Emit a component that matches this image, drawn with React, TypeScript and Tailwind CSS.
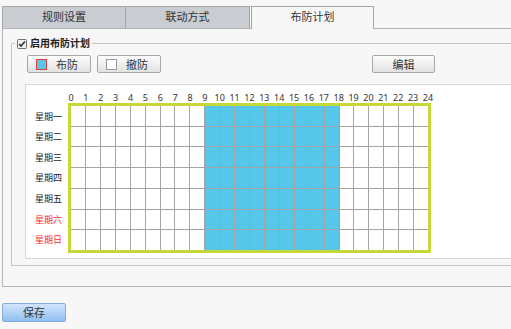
const hours = Array.from({ length: 25 }, (_, i) => i);
const days = ["星期一", "星期二", "星期三", "星期四", "星期五", "星期六", "星期日"];

function Swatch({ on }: { on: boolean }) {
  return (
    <span
      className={
        on
          ? "w-[11px] h-[11px] border border-[#e43b3b] bg-[#57c6ea] shrink-0"
          : "w-[11px] h-[11px] border border-[#9a9a9a] bg-white shrink-0"
      }
    />
  );
}

export default function App() {
  return (
    <div className="w-[511px] h-[329px] overflow-hidden bg-[#f7f7f7] pt-[6px] font-['Noto_Sans','Noto_Sans_CJK_SC',sans-serif] text-[#333]">
      {/* tabs */}
      <div className="flex items-end ml-[2px] h-[22px]">
        <div className="w-[124px] h-[22px] border-t border-l border-r border-[#a6a6a6] bg-[#c9ccd1] flex items-center justify-center text-[11px]">
          规则设置
        </div>
        <div className="w-[124px] h-[22px] border-t border-r border-[#a6a6a6] bg-[#c9ccd1] flex items-center justify-center text-[11px]">
          联动方式
        </div>
        <div className="relative -mb-px ml-px w-[123px] h-[23px] border-t border-l border-r border-[#a6a6a6] bg-[#f7f7f7] flex items-center justify-center text-[11px] pb-px">
          布防计划
        </div>
      </div>

      {/* panel */}
      <div className="ml-[2px] w-[700px] h-[259px] border border-[#b4b4b4] bg-[#f7f7f7] pl-[8px] pt-[8px]">
        <fieldset className="w-[700px] h-[229px] border border-[#c6c6c6]">
          <legend className="ml-[3px] px-[2px] flex items-center gap-[3px] h-[13px]">
            <svg width="10" height="10" viewBox="0 0 10 10" className="shrink-0">
              <rect x="0.5" y="0.5" width="9" height="9" rx="1" fill="#f0f0f0" stroke="#6f6f6f" />
              <path d="M2.2 5.1 L4.1 7.1 L7.9 2.6" fill="none" stroke="#333" strokeWidth="1.6" />
            </svg>
            <span className="text-[10px] font-bold leading-[13px] text-[#222]">启用布防计划</span>
          </legend>

          <div className="flex items-center pl-[15px] pt-[5px]">
            <button className="w-[64px] h-[18px] border border-[#a8a8a8] rounded-[2px] bg-linear-to-b from-[#fdfdfd] to-[#e2e2e2] flex items-center pl-[8px] gap-[9px] text-[11px] leading-none">
              <Swatch on />
              布防
            </button>
            <button className="ml-[6px] w-[64px] h-[18px] border border-[#a8a8a8] rounded-[2px] bg-linear-to-b from-[#fdfdfd] to-[#e2e2e2] flex items-center pl-[8px] gap-[9px] text-[11px] leading-none">
              <Swatch on={false} />
              撤防
            </button>
            <button className="ml-[211px] w-[63px] h-[18px] border border-[#a8a8a8] rounded-[2px] bg-linear-to-b from-[#fdfdfd] to-[#e2e2e2] flex items-center justify-center text-[11px] leading-none">
              编辑
            </button>
          </div>

          {/* schedule */}
          <div className="mt-[11px] ml-[13px] w-[700px] h-[175px] border border-[#d4d7de] bg-white pt-[8px] flex">
            <div className="w-[42px] pt-[13px] pr-[6px] flex flex-col">
              {days.map((d, i) => (
                <div
                  key={d}
                  className={
                    "h-[20.57px] flex items-center justify-end text-[9px] leading-none " +
                    (i >= 5 ? "text-[#ff2a2a]" : "text-[#222]")
                  }
                >
                  {d}
                </div>
              ))}
            </div>
            <div className="flex flex-col">
              <div className="flex h-[10px] -ml-[4.44px]">
                {hours.map((h) => (
                  <span key={h} className="w-[14.875px] shrink-0 text-center text-[9px] leading-[10px] text-[#333]">
                    {h}
                  </span>
                ))}
              </div>
              <div className="w-[363px] h-[150px] border-[3px] border-[#c6d739] bg-[#a4a4a4] grid grid-cols-24 grid-rows-7 gap-px">
                {days.map((d) =>
                  hours.slice(0, 24).map((h) => (
                    <div key={d + h} className={h >= 9 && h < 18 ? "bg-[#56c6e9]" : "bg-white"} />
                  ))
                )}
              </div>
            </div>
          </div>
        </fieldset>
      </div>

      <button className="mt-[16px] ml-[2px] w-[64px] h-[19px] border border-[#82ace0] rounded-[2px] bg-linear-to-b from-[#d0e5fc] to-[#94bff2] flex items-center justify-center text-[11px] leading-none text-[#333]">
        保存
      </button>
    </div>
  );
}
